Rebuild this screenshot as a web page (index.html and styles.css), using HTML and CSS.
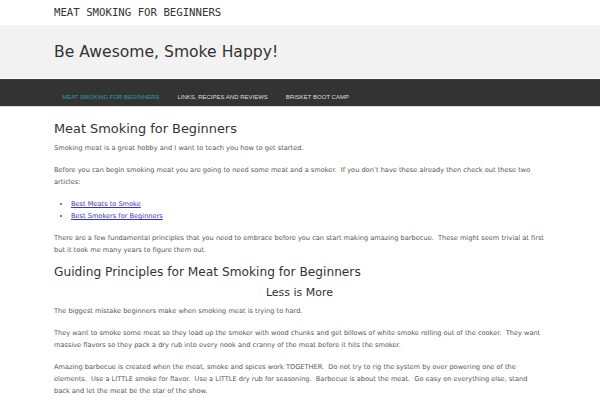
FILE: index.html
```html
<!DOCTYPE html>
<html lang="en">
<head>
  <meta charset="UTF-8">
  <title>Meat Smoking for Beginners</title>
  <link rel="stylesheet" href="styles.css">
</head>
<body>
  <div class="topbar">
    <div class="wrap">MEAT SMOKING FOR BEGINNERS</div>
  </div>

  <header class="masthead">
    <div class="wrap">
      <div class="tagline">Be Awesome, Smoke Happy!</div>
    </div>
  </header>

  <nav class="mainnav">
    <div class="wrap">
      <ul>
        <li><a href="#" class="current">Meat Smoking for Beginners</a></li>
        <li><a href="#">Links, Recipes and Reviews</a></li>
        <li><a href="#">Brisket Boot Camp</a></li>
      </ul>
    </div>
  </nav>

  <main class="wrap content">
    <h1>Meat Smoking for Beginners</h1>
    <p>Smoking meat is a great hobby and I want to teach you how to get started.</p>
    <p>Before you can begin smoking meat you are going to need some meat and a smoker.&nbsp; If you don&#8217;t have these already then check out these two articles:</p>
    <ul class="links">
      <li><a href="#">Best Meats to Smoke</a></li>
      <li><a href="#">Best Smokers for Beginners</a></li>
    </ul>
    <p>There are a few fundamental principles that you need to embrace before you can start making amazing barbecue.&nbsp; These might seem trivial at first but it took me many years to figure them out.</p>

    <h2>Guiding Principles for Meat Smoking for Beginners</h2>
    <h3>Less is More</h3>
    <p>The biggest mistake beginners make when smoking meat is trying to hard.</p>
    <p>They want to smoke some meat so they load up the smoker with wood chunks and get billows of white smoke rolling out of the cooker.&nbsp; They want massive flavors so they pack a dry rub into every nook and cranny of the meat before it hits the smoker.</p>
    <p>Amazing barbecue is created when the meat, smoke and spices work TOGETHER.&nbsp; Do not try to rig the system by over powering one of the elements.&nbsp; Use a LITTLE smoke for flavor.&nbsp; Use a LITTLE dry rub for seasoning.&nbsp; Barbecue is about the meat.&nbsp; Go easy on everything else, stand back and let the meat be the star of the show.</p>
  </main>
</body>
</html>
```

FILE: styles.css
```css
body {
  margin: 0;
  background-color: #fff;
  font-family: "DejaVu Sans", Verdana, sans-serif;
  color: #555;
}

.wrap {
  width: 492px;
  margin: 0 54px;
}

.content {
  width: 491px;
  padding-top: 12px;
  font-size: 6.62px;
  line-height: 12px;
}

.topbar {
  height: 25px;
  display: flex;
  align-items: center;
  font-family: "DejaVu Sans Mono", monospace;
  font-size: 10.7px;
  color: #333;
}

.masthead {
  background-color: #f2f2f2;
  height: 53px;
  display: flex;
  align-items: center;
  border-bottom: 1px solid #fafafa;
}

.tagline {
  font-family: "DejaVu Sans", sans-serif;
  font-size: 15.6px;
  color: #333;
}

.mainnav {
  background-color: #333;
  height: 26px;
  border-top: 1px solid #3d3d3d;
  border-bottom: 1px solid #ddd;
}

.mainnav ul {
  list-style: none;
  margin: 0;
  padding: 0 0 0 8px;
  display: flex;
  gap: 18px;
  height: 26px;
  align-items: center;
}

.mainnav a {
  font-family: "Liberation Sans", Arial, sans-serif;
  font-size: 6px;
  text-transform: uppercase;
  color: #ddd;
  text-decoration: none;
}

.mainnav a.current {
  color: #2f9bb0;
}

h1 {
  font-family: "DejaVu Sans", sans-serif;
  font-weight: normal;
  font-size: 12.9px;
  color: #333;
  margin: 0 0 3px;
  line-height: 20px;
}

h2 {
  font-family: "DejaVu Sans", sans-serif;
  font-weight: normal;
  font-size: 12.2px;
  color: #333;
  margin: -3px 0 5px;
  line-height: 18px;
}

h3 {
  font-family: "DejaVu Sans", sans-serif;
  font-weight: normal;
  font-size: 11px;
  color: #333;
  text-align: center;
  margin: 0 0 5px;
  line-height: 14px;
}

p {
  margin: 0 0 10px;
}

.links {
  margin: 0 0 10px;
  padding-left: 17px;
}

.links a {
  color: #3535b5;
}
```
